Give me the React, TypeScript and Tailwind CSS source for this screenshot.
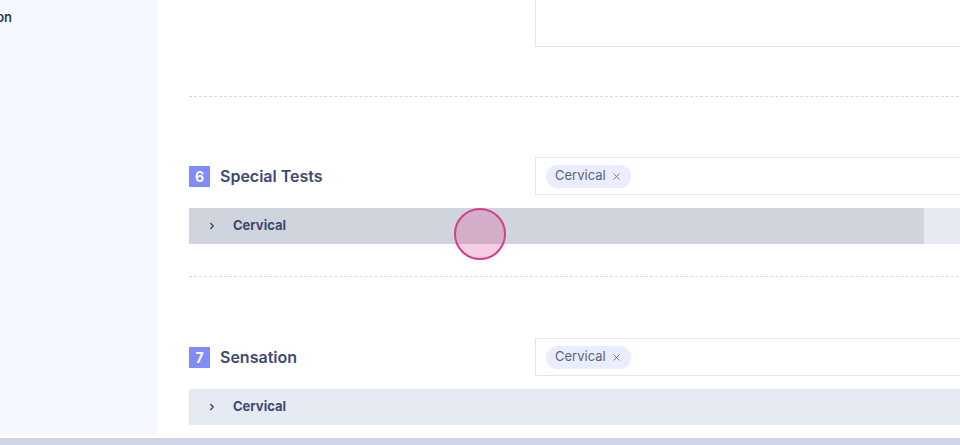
import { ChevronRight, X } from 'lucide-react';

type Section = {
  index: number;
  title: string;
  tag: string;
  hovered?: boolean;
};

const sections: Section[] = [
  { index: 6, title: 'Special Tests', tag: 'Cervical', hovered: true },
  { index: 7, title: 'Sensation', tag: 'Cervical' },
];

function TagInput({ tag }: { tag: string }): JSX.Element {
  return (
    <div className="flex h-[38px] flex-1 items-center border border-[#e3e5ee] bg-white px-[10px]">
      <span className="flex h-[23px] items-center gap-[5px] rounded-full bg-[#e9edfd] px-[9px] text-[13px] text-[#5b6479]">
        {tag}
        <X className="h-[11px] w-[11px] text-[#6b7386]" strokeWidth={2} />
      </span>
    </div>
  );
}

function SectionBlock({ section }: { section: Section }): JSX.Element {
  return (
    <section className="flex flex-col">
      <div className="flex items-center">
        <div className="flex w-[346px] items-center gap-[10px]">
          <span className="flex h-[21px] w-[21px] items-center justify-center bg-[#7f8cf9] text-[14px] font-bold text-white">
            {section.index}
          </span>
          <h3 className="text-[16px] font-semibold text-[#3d4a6e]">{section.title}</h3>
        </div>
        <TagInput tag={section.tag} />
      </div>

      <div className="relative mt-[13px] flex h-[36px] bg-[#e6eaf2]">
        <button
          type="button"
          className={
            section.hovered
              ? 'flex h-full w-[735px] items-center gap-[16px] bg-[#d0d4dc] pl-[18px] text-[13px] font-bold text-[#3d4a6e]'
              : 'flex h-full w-[735px] items-center gap-[16px] pl-[18px] text-[13px] font-bold text-[#3d4a6e]'
          }
        >
          <ChevronRight className="h-[10px] w-[10px]" strokeWidth={3.5} />
          Cervical
        </button>
        {section.hovered ? (
          <span className="pointer-events-none absolute left-[265px] top-0 h-[52px] w-[52px] rounded-full border-2 border-[#d63d8a] bg-[#d63d8a]/25" />
        ) : null}
      </div>
    </section>
  );
}

export default function App(): JSX.Element {
  return (
    <div
      className="flex h-[445px] w-[960px] flex-col overflow-hidden bg-white"
      style={{ fontFamily: 'Inter, "Noto Sans", sans-serif' }}
    >
      <div className="flex h-[435px] overflow-hidden">
        <aside className="w-[157px] shrink-0 overflow-hidden bg-[#f5f8ff] pt-[8px]">
          <div className="flex w-[12px] justify-end">
            <span className="whitespace-nowrap text-[13px] font-semibold text-[#2f3a52]">Sensation</span>
          </div>
        </aside>

        <main className="flex-1 overflow-hidden pl-[32px]">
          <div className="flex w-[850px] flex-col">
            <div className="flex">
              <div className="w-[346px]" />
              <div className="h-[47px] flex-1 border border-t-0 border-[#e3e5ee]" />
            </div>

            <div className="mt-[49px] border-t border-dashed border-[#d5dbee]" />

            <div className="mt-[60px]">
              <SectionBlock section={sections[0]} />
            </div>

            <div className="mt-[32px] border-t border-dashed border-[#d5dbee]" />

            <div className="mt-[61px]">
              <SectionBlock section={sections[1]} />
            </div>
          </div>
        </main>
      </div>
      <div className="mt-[3px] h-[7px] bg-[#d0d6e8]" />
    </div>
  );
}
